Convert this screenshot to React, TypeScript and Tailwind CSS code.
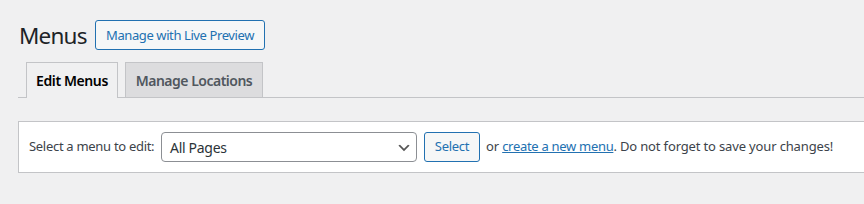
export default function App() {
  return (
    <div className="w-full h-[204px] bg-[#f0f0f1] overflow-hidden pl-[18px] font-['Noto_Sans',sans-serif] text-[13px] text-[#3c434a]">
      <div className="flex items-start pt-[20px] h-[50px]">
        <h1 className="w-[77px] pl-[1px] pt-[1px] text-[22.5px] leading-[30px] font-normal text-[#1d2327] tracking-[-0.8px]">Menus</h1>
        <button className="h-[30px] w-[170px] border border-[#2271b1] rounded-[3px] bg-[#f6f7f7] text-[#2271b1] text-[13px] leading-[28px] tracking-[-0.4px]">
          Manage with Live Preview
        </button>
      </div>
      <div className="mt-[12px] flex items-end h-[36px] border-b border-[#c3c4c7] pl-[8px]">
        <div className="h-[36px] -mb-px w-[92px] flex items-center justify-center border border-b-0 border-[#c3c4c7] bg-[#f0f0f1] text-[14px] font-semibold text-black tracking-[-0.4px]">
          Edit Menus
        </div>
        <div className="h-[35px] ml-[7px] w-[138px] flex items-center justify-center border border-b-0 border-[#c3c4c7] bg-[#dcdcde] text-[14px] font-semibold text-[#50575e] tracking-[-0.5px]">
          Manage Locations
        </div>
      </div>
      <div className="mt-[23px] h-[52px] -mr-[4px] border border-[#c3c4c7] bg-white flex items-center pl-[10px]">
        <span className="w-[132px] tracking-[-0.3px]">Select a menu to edit:</span>
        <div className="w-[256px] h-[30px] flex items-center justify-between border border-[#8c8f94] rounded-[4px] bg-white pl-[8px] pr-[4px] text-[14px] text-[#2c3338]">
          <span className="tracking-[-0.3px]">All Pages</span>
          <svg width="16" height="16" viewBox="0 0 20 20" className="mt-[2px]">
            <path d="M5 6l5 5 5-5 2 1-7 7-7-7 2-1z" fill="#555" />
          </svg>
        </div>
        <button className="ml-[7px] w-[56px] h-[30px] border border-[#2271b1] rounded-[3px] bg-[#f6f7f7] text-[#2271b1] text-[13px] tracking-[-0.3px]">
          Select
        </button>
        <span className="ml-[6px] tracking-[-0.15px]">
          or{" "}
          <a href="#" className="text-[#2271b1] underline tracking-[-0.3px]">create a new menu</a>. Do not forget to save your changes!
        </span>
      </div>
    </div>
  );
}
